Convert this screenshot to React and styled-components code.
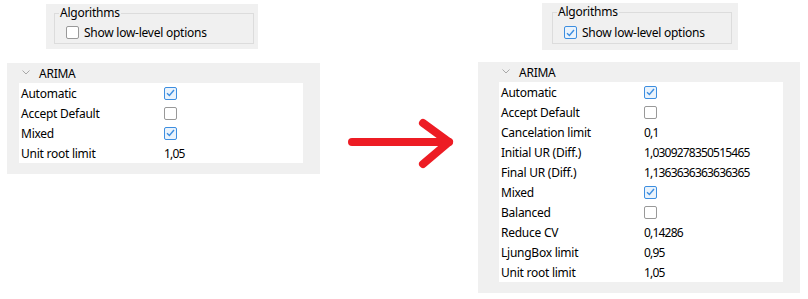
import styled, { createGlobalStyle } from "styled-components";

const GlobalStyle = createGlobalStyle`
    body {
        margin: 0;
        background: #ffffff;
        font-family: "Segoe UI", "Noto Sans", sans-serif;
        font-size: 12px;
        letter-spacing: -0.25px;
        color: #000000;
    }
`;

const Page = styled.div`
    width: 808px;
    height: 299px;
    display: flex;
    padding-left: 7px;
    box-sizing: border-box;
`;

const Side = styled.div`
    width: ${(p) => p.width}px;
    padding-top: ${(p) => p.top}px;
    display: flex;
    flex-direction: column;
    gap: ${(p) => p.gap}px;
`;

const ArrowCell = styled.div`
    width: 158px;
    padding-top: 116px;
    padding-left: 24px;
    box-sizing: border-box;
`;

const GroupBox = styled.div`
    margin-left: ${(p) => p.offset}px;
    width: ${(p) => p.width}px;
    height: ${(p) => p.height}px;
    background: #f0f0f0;
    box-sizing: border-box;
    padding: 2px ${(p) => p.right}px 0 ${(p) => p.left}px;
`;

const Fieldset = styled.fieldset`
    margin: 0;
    border: 1px solid #dcdcdc;
    padding: ${(p) => p.padTop}px 0 4px 0;
`;

const Legend = styled.legend`
    padding: 0 1px;
    margin-left: 4px;
    line-height: 14px;
`;

const CheckRow = styled.label`
    display: flex;
    align-items: center;
    gap: 5px;
    height: 13px;
    line-height: 13px;
    margin-left: 11px;
`;

const Box = styled.span`
    width: 13px;
    height: 13px;
    flex: none;
    box-sizing: border-box;
    border-radius: 2px;
    border: 1px solid ${(p) => (p.checked ? "#3d8ee0" : "#999999")};
    background: ${(p) => (p.checked ? "#eaf3fc" : "#ffffff")};
    display: flex;
    align-items: center;
    justify-content: center;
`;

const Panel = styled.div`
    background: #f0f0f0;
    padding: 0 17px 11px ${(p) => p.inset}px;
`;

const Header = styled.div`
    height: 20px;
    display: flex;
    align-items: center;
    gap: 9px;
    padding-left: 3px;

    svg {
        margin-bottom: 2px;
    }
`;

const Grid = styled.div`
    background: #ffffff;
    display: grid;
    grid-template-columns: 143px 1fr;
    padding-left: 2px;
`;

const Cell = styled.div`
    height: 20px;
    display: flex;
    align-items: center;
    white-space: nowrap;
`;

const Value = styled(Cell)`
    letter-spacing: -0.8px;
`;

const Check = ({ checked }) => (
    <Box checked={checked}>
        {checked && (
            <svg width="9" height="8" viewBox="0 0 9 8">
                <polyline points="1,4.2 3.4,6.5 8,1" fill="none" stroke="#3d8ee0" strokeWidth="1.4" />
            </svg>
        )}
    </Box>
);

const Chevron = () => (
    <svg width="8" height="5" viewBox="0 0 8 5">
        <polyline points="0.5,0.5 4,4 7.5,0.5" fill="none" stroke="#a8a8a8" strokeWidth="1" />
    </svg>
);

const Arrow = () => (
    <svg width="112" height="54" viewBox="0 0 112 54">
        <g stroke="#ed1c24" strokeWidth="8" strokeLinecap="round" strokeLinejoin="round" fill="none">
            <line x1="8" y1="26" x2="105" y2="26" />
            <polyline points="79,7 105,26 79,48" />
        </g>
    </svg>
);

const Algorithms = ({ checked, padTop, ...box }) => (
    <GroupBox {...box}>
        <Fieldset padTop={padTop}>
            <Legend>Algorithms</Legend>
            <CheckRow>
                <Check checked={checked} />
                Show low-level options
            </CheckRow>
        </Fieldset>
    </GroupBox>
);

const ArimaPanel = ({ inset, rows }) => (
    <Panel inset={inset}>
        <Header>
            <Chevron />
            ARIMA
        </Header>
        <Grid>
            {rows.map(([label, value]) => [
                <Cell key={label}>{label}</Cell>,
                <Value key={label + "-v"}>
                    {typeof value === "boolean" ? <Check checked={value} /> : value}
                </Value>,
            ])}
        </Grid>
    </Panel>
);

const shortRows = [
    ["Automatic", true],
    ["Accept Default", false],
    ["Mixed", true],
    ["Unit root limit", "1,05"],
];

const longRows = [
    ["Automatic", true],
    ["Accept Default", false],
    ["Cancelation limit", "0,1"],
    ["Initial UR (Diff.)", "1,0309278350515465"],
    ["Final UR (Diff.)", "1,1363636363636365"],
    ["Mixed", true],
    ["Balanced", false],
    ["Reduce CV", "0,14286"],
    ["LjungBox limit", "0,95"],
    ["Unit root limit", "1,05"],
];

const App = () => {
    return (
        <>
            <GlobalStyle />
            <Page>
                <Side width={313} top={4} gap={14}>
                    <Algorithms checked={false} padTop={6} offset={39} width={212} height={45} left={8} right={4} />
                    <ArimaPanel inset={12} rows={shortRows} />
                </Side>
                <ArrowCell>
                    <Arrow />
                </ArrowCell>
                <Side width={322} top={3} gap={12}>
                    <Algorithms checked={true} padTop={7} offset={64} width={196} height={47} left={10} right={6} />
                    <ArimaPanel inset={21} rows={longRows} />
                </Side>
            </Page>
        </>
    );
};

export default App;
